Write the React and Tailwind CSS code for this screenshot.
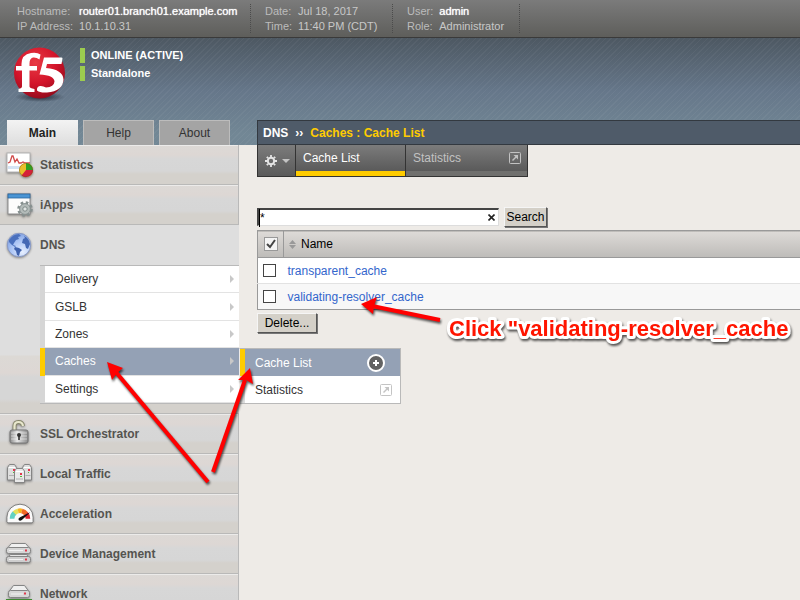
import React from "react";

const Shadow = "drop-shadow-[0_1px_1px_rgba(0,0,0,0.4)]";

function StatisticsIcon() {
  return (
    <svg viewBox="0 0 28 28" className={"h-7 w-7 " + Shadow}>
      <rect x="1" y="2" width="23" height="19" fill="#fff" stroke="#b4b4b4" />
      <rect x="2" y="15" width="21" height="3" fill="#d5e4f5" />
      <path d="M2 12l2-1 2-6h1l2 6 2-3 2 4 2 0 2-1 2 1h5" fill="none" stroke="#d04a4a" strokeWidth="1.3" />
      <circle cx="20" cy="19" r="7" fill="#e8bf2a" />
      <path d="M20 19V12a7 7 0 0 1 7 7z" fill="#2fa023" />
      <path d="M20 19h7a7 7 0 0 1-11.500 5.400z" fill="#d5203a" />
      <circle cx="20" cy="19" r="6.600" fill="none" stroke="#6a4a20" strokeOpacity=".5" strokeWidth=".8" />
    </svg>
  );
}

function AppsIcon() {
  return (
    <svg viewBox="0 0 28 28" className={"h-7 w-7 " + Shadow}>
      <rect x="2" y="3" width="22" height="20" fill="#fcfcfc" stroke="#8b8b8b" />
      <rect x="2" y="3" width="22" height="4" fill="#4a94d4" stroke="#2b66a0" strokeWidth=".8" />
      <circle cx="19" cy="18" r="6.500" fill="none" stroke="#86908f" strokeWidth="2.600" strokeDasharray="2.600 2.500" />
      <circle cx="19" cy="18" r="5.400" fill="#b3bbb9" stroke="#86908f" />
      <circle cx="19" cy="18" r="2.200" fill="#dfe3e2" stroke="#7f8a88" />
    </svg>
  );
}

function GlobeIcon() {
  return (
    <svg viewBox="0 0 28 28" className={"h-7 w-7 " + Shadow}>
      <defs>
        <radialGradient id="globe" cx=".65" cy=".8" r=".85">
          <stop offset="0" stopColor="#e6efff" />
          <stop offset=".6" stopColor="#a9c3f4" />
          <stop offset="1" stopColor="#7b9de0" />
        </radialGradient>
      </defs>
      <circle cx="13" cy="14" r="11.700" fill="url(#globe)" stroke="#8798c4" />
      <path d="M3 9q4-6 10-6l2 2-3 1 1 2-3 1-2 3-1 2 3 1-1 1-3-2-3-3z" fill="#4a70bd" />
      <path d="M9 16l4 1 3 2-2 2-1 4-2-1-1-4-2-2z" fill="#3f62ad" />
      <path d="M18 5q5 2 6 8l-2 5-2-1-1-4-3-1 1-4 2-1z" fill="#4468b4" />
    </svg>
  );
}

function LockIcon() {
  return (
    <svg viewBox="0 0 28 28" className={"h-7 w-7 " + Shadow}>
      <defs>
        <linearGradient id="steel" x1="0" y1="0" x2="1" y2="0">
          <stop offset="0" stopColor="#8a8a8a" />
          <stop offset=".4" stopColor="#e6e6e6" />
          <stop offset="1" stopColor="#8a8a8a" />
        </linearGradient>
      </defs>
      <path d="M8.500 12V6q0-4 4-4t4.500 4" fill="none" stroke="#85856a" strokeWidth="4" />
      <path d="M8.500 12V6q0-4 4-4t4.500 4" fill="none" stroke="#e8e7cd" strokeWidth="2.200" />
      <rect x="4" y="10" width="18" height="13" rx="2" fill="url(#steel)" stroke="#777" />
      <path d="M5 13h16M5 16h16M5 19h16" stroke="#fff" strokeOpacity=".5" />
      <circle cx="13" cy="15" r="2" fill="#333" />
      <path d="M13 15v5" stroke="#333" strokeWidth="1.600" />
    </svg>
  );
}

function TrafficIcon() {
  return (
    <svg viewBox="0 0 28 28" className={"h-7 w-7 " + Shadow}>
      <g stroke="#858585">
        <path d="M1.500 20V7.500l2-3h5l2 3V20z" fill="#dedede" />
        <path d="M16.500 20V7.500l2-3h5l2 3V20z" fill="#dedede" />
        <path d="M8.500 22.500V11l2-2.500h6L18.500 11v11.500z" fill="#e9e9e9" />
      </g>
      <path d="M3 7.500h6M18 7.500h6M10 11.500h7" stroke="#fff" />
      <path d="M3 15.500h5M19.500 15.500h5M10 19h7" stroke="#b0b0b0" />
      <path d="M7 9h2v2H7zM22 9h2v2h-2zM14 13h2v2h-2z" fill="#e0384c" />
      <path d="M7 12h1v1H7zM22 12h1v1h-1zM14 16h2v1h-2z" fill="#58b83a" />
    </svg>
  );
}

function GaugeIcon() {
  return (
    <svg viewBox="0 0 30 28" className={"h-7 w-7 " + Shadow}>
      <path d="M1 22.500v-5a14 14 0 0 1 28 0v5l-1 1H2z" fill="#fafafa" stroke="#777" />
      <g fill="none" strokeWidth="5">
        <path d="M6.500 19a8.500 8.500 0 0 1 3-6.500" stroke="#62d1c3" />
        <path d="M9 13a8.500 8.500 0 0 1 4-2.300" stroke="#e4e25a" />
        <path d="M13 10.700a8.500 8.500 0 0 1 4 0" stroke="#f8b421" />
        <path d="M17 10.700a8.500 8.500 0 0 1 4.500 3" stroke="#f06a24" />
        <path d="M21.500 13.500a8.500 8.500 0 0 1 2 5.500" stroke="#dd2432" />
      </g>
      <path d="M26 12L17 20.500q-2 1.500-3.500 0-.8-2 1.500-3z" fill="#111" />
    </svg>
  );
}

function DeviceIcon() {
  return (
    <svg viewBox="0 0 28 28" className={"h-7 w-7 " + Shadow}>
      <g stroke="#858585">
        <path d="M1.500 8l4-4.500h14l4 4.500v4h-22z" fill="#f0f0f0" />
        <rect x=".500" y="7.500" width="24" height="6" rx="2" fill="#d6d6d6" />
        <path d="M1.500 18l3-3.500h16l3 3.500v4h-22z" fill="#e5e5e5" />
        <rect x=".500" y="16.500" width="24" height="6" rx="2" fill="#cecece" />
      </g>
      <path d="M3 10.500h14M3 19.500h14" stroke="#f2f2f2" />
      <path d="M19 9.500h2v2h-2zM19 18.500h2v2h-2z" fill="#e0384c" />
    </svg>
  );
}

function NetworkIcon() {
  return (
    <svg viewBox="0 0 28 28" className={"h-7 w-7 " + Shadow}>
      <path d="M0 19h26v3H0z" fill="#3d8a32" />
      <g stroke="#858585">
        <path d="M3.500 11l4-5.500h11l4 5.500v5h-19z" fill="#f0f0f0" />
        <rect x="2.500" y="10.500" width="21" height="7" rx="2" fill="#d6d6d6" />
      </g>
      <path d="M5 14h12" stroke="#f2f2f2" />
      <path d="M18 12.500h2v2h-2z" fill="#e0384c" />
    </svg>
  );
}

function Logo() {
  return (
    <svg viewBox="0 0 56 58" className="h-[58px] w-14" role="img" aria-label="f5">
      <defs>
        <radialGradient id="ball" cx=".42" cy=".3" r=".75">
          <stop offset="0" stopColor="#e83a44" />
          <stop offset=".55" stopColor="#d3142a" />
          <stop offset="1" stopColor="#8d0a1b" />
        </radialGradient>
        <radialGradient id="floor">
          <stop offset="0" stopColor="#1d2530" stopOpacity=".9" />
          <stop offset="1" stopColor="#1d2530" stopOpacity="0" />
        </radialGradient>
      </defs>
      <ellipse cx="28" cy="50" rx="25" ry="5" fill="url(#floor)" />
      <circle cx="27.500" cy="26" r="25.500" fill="url(#ball)" />
      <path
        d="M4 19h5.500v-2q0-9.500 9.500-11 6-1 9.500 1.500l-1 5q-3.500-2.500-6.500-2-3.500 1-3.500 6v2.500H25v4.500h-7.500v16q0 1.800 5 2.500v3H6.500v-3q3.500-.7 3.500-2.500v-16H4z"
        fill="#fff"
      />
      <path
        d="M32 10.500h17.500q1 0 1 1L49.500 17H35l-1 4q17 1.500 17.500 11.500-.5 11.500-16.500 13-7 .5-10-2-.5-4 3-4.500 3-.3 6 1.500 8-.5 8.500-6-.5-6.500-15-7z"
        fill="#fff"
      />
    </svg>
  );
}

function PopOutIcon({ className }) {
  return (
    <svg viewBox="0 0 12 12" className={className} fill="none" stroke="currentColor">
      <rect x=".5" y=".5" width="11" height="11" rx="1" />
      <path d="M3.500 8.500l4-4" strokeWidth="1.500" />
      <path d="M4.500 3h4.500v4.500z" fill="currentColor" stroke="none" />
    </svg>
  );
}

function GearIcon() {
  return (
    <svg viewBox="0 0 14 14" className="h-3.5 w-3.5" fill="none" stroke="#e4e4e4">
      <circle cx="7" cy="7" r="3.200" strokeWidth="2" />
      <path d="M7 1v2M7 11v2M1 7h2M11 7h2M2.800 2.800l1.400 1.400M9.800 9.800l1.400 1.400M2.800 11.200l1.400-1.400M9.800 4.200l1.400-1.400" strokeWidth="1.800" />
    </svg>
  );
}

const rowFill =
  "bg-[linear-gradient(to_bottom,#dcd9d6_0px,#ddd7d4_10px,#d7d7d7_14px,#d6d6d6_26px,#d4d1cc_29px,#d4d1cc_38px)]";

function SideRow({ icon, children }) {
  return (
    <li>
      <a
        href="#"
        className={
          "flex h-10 items-center gap-1.5 border-b border-[#b9b9b8] pl-[6px] text-[12px] font-bold text-[#555450] shadow-[inset_0_1px_0_#ecebea] " +
          rowFill
        }
      >
        {icon}
        {children}
      </a>
    </li>
  );
}

function MenuItem({ children, active, flyout }) {
  return (
    <li
      className={
        "relative flex flex-1 border-l-[5px] " +
        (active ? "border-l-[#ffcc00] bg-[#94a1b5] text-white" : "border-l-[#d6d6d6] bg-white text-[#333]")
      }
    >
      <a href="#" className="flex flex-1 items-center justify-between border-b border-[#e3e3e3] pr-[5px] pl-2.5">
        {children}
        <svg viewBox="0 0 4 8" className="h-2 w-1">
          <path d="M0 0l4 4-4 4z" fill="#c8c8c8" />
        </svg>
      </a>
      {flyout}
    </li>
  );
}

function Flyout() {
  return (
    <ul className="absolute top-0 left-full z-10 w-[162px] border border-[#b9b9b9] border-l-[#eeebe7] text-[#333]">
      <li className="border-l-[5px] border-[#ffcc00] bg-[#94a1b5] text-white">
        <a href="#" className="flex h-[27px] items-center justify-between pr-[15px] pl-2.5">
          Cache List
          <svg viewBox="0 0 18 18" className="h-[18px] w-[18px]">
            <circle cx="9" cy="9" r="8" fill="#626262" stroke="#fff" strokeWidth="2" />
            <path d="M9 6v6M6 9h6" stroke="#fff" strokeWidth="2" />
          </svg>
        </a>
      </li>
      <li className="border-l-[5px] border-[#dddddd] bg-white">
        <a href="#" className="flex h-[27px] items-center justify-between pr-2 pl-2.5">
          Statistics
          <PopOutIcon className="h-3 w-3 text-[#c4c4c4]" />
        </a>
      </li>
    </ul>
  );
}

function InfoPair({ rows, className }) {
  return (
    <dl
      className={
        "grid h-[29px] grid-cols-[auto_1fr] content-center border-r border-dotted border-[#4b4b4b] text-[11px] leading-[15px] " +
        className
      }
    >
      {rows.map(([label, value, strong]) => (
        <React.Fragment key={label}>
          <dt className="text-[#bcbcbc]">{label}</dt>
          <dd className={strong ? "text-white [text-shadow:0_0_1px_#ffffff]" : "text-[#c8c8c8]"}>{value}</dd>
        </React.Fragment>
      ))}
    </dl>
  );
}

const bevel = "border border-[#f5f5f5] border-r-[#555] border-b-[#555] bg-[#d4d0c8] shadow-[1px_1px_0_#777] text-black";

function CacheTable() {
  return (
    <table className="mt-[3px] w-full border-collapse text-[12px]">
      <thead>
        <tr className="h-[27px] border-y border-[#999] bg-linear-to-b from-[#dddad7] to-[#bebcb9]">
          <th className="w-[26px] border-x border-[#999] p-0">
            <span className="flex justify-center">
              <input
                type="checkbox"
                defaultChecked
                aria-label="Select all"
                className="h-[14px] w-[14px] appearance-none border border-[#999] bg-[#f4f4f4]"
              />
              <svg viewBox="0 0 14 14" className="pointer-events-none -ml-[14px] h-[14px] w-[14px]">
                <path d="M3 7l3 3 5-7" fill="none" stroke="#444" strokeWidth="2" />
              </svg>
            </span>
          </th>
          <th className="p-0 pl-[5px] text-left font-normal text-black">
            <span className="flex items-center gap-[5px]">
              <svg viewBox="0 0 7 9" className="h-[9px] w-[7px]" fill="#999">
                <path d="M0 4l3.500-4L7 4zM0 5l3.500 4L7 5z" />
              </svg>
              Name
            </span>
          </th>
        </tr>
      </thead>
      <tbody className="border-b border-l border-[#999]">
        {["transparent_cache", "validating-resolver_cache"].map((name, i) => (
          <tr key={name} className={"h-[26px] " + (i ? "border-t border-[#e2e2e2] bg-[#f7f7f7]" : "bg-white")}>
            <td className="p-0">
              <input
                type="checkbox"
                aria-label={name}
                className="ml-[5px] block h-[13px] w-[13px] appearance-none border border-[#444] bg-white"
              />
            </td>
            <td className="p-0 pl-1">
              <a href="#" className="text-[#3366cc]">
                {name}
              </a>
            </td>
          </tr>
        ))}
      </tbody>
    </table>
  );
}

function Annotations() {
  return (
    <svg
      width="800"
      height="600"
      className="pointer-events-none absolute top-0 left-0 z-20 drop-shadow-[1px_2px_1px_rgba(0,0,0,0.65)]"
    >
      <g stroke="#ff0000" strokeWidth="4">
        <path d="M208 482L115 371" />
        <path d="M213 472L245 380" />
        <path d="M440 320L372 306" />
      </g>
      <g fill="#ff0000">
        <path d="M107 362l16 6-6 5-5 7z" />
        <path d="M250 368l3 16-7-4-8 0z" />
        <path d="M361 304l16-7-3 9-1 8z" />
      </g>
      <text
        x="449"
        y="336"
        className="fill-[#ff1500] stroke-white text-[22px] font-bold [paint-order:stroke]"
        strokeWidth="6"
        strokeLinejoin="round"
      >
        Click "validating-resolver_cache
      </text>
    </svg>
  );
}

export default function App() {
  return (
    <div className="relative flex h-screen flex-col overflow-hidden bg-[#eeebe7] font-['Liberation_Sans',Arial,sans-serif] text-[12px]">
      <header className="flex h-[38px] shrink-0 items-center border-b border-[#3a3a3a] bg-linear-to-b from-[#7b7b7b] to-[#5e5e5b]">
        <InfoPair
          className="w-[251px] gap-x-[6px] pl-[17px]"
          rows={[["Hostname:", "router01.branch01.example.com", true], ["IP Address:", "10.1.10.31"]]}
        />
        <InfoPair className="w-[142px] gap-x-[6px] pl-[14px]" rows={[["Date:", "Jul 18, 2017"], ["Time:", "11:40 PM (CDT)"]]} />
        <InfoPair className="w-[127px] gap-x-[6px] pl-[14px]" rows={[["User:", "admin", true], ["Role:", "Administrator"]]} />
      </header>

      <div className="flex h-[107px] shrink-0 items-end bg-[repeating-linear-gradient(135deg,rgba(255,255,255,0.04)_0px,rgba(255,255,255,0.04)_1px,transparent_1px,transparent_4px),linear-gradient(to_bottom,#4d5862,#66778a_50%,#728795_90%)]">
        <div className="flex h-full w-[257px] shrink-0 flex-col justify-between">
          <div className="flex gap-3 pt-[9px] pl-3">
            <Logo />
            <div className="flex flex-col gap-[3px] pt-px text-[11px] leading-[15px] font-bold text-white">
              <span className="border-l-[5px] border-[#9ccc4f] pl-[6px]">ONLINE (ACTIVE)</span>
              <span className="border-l-[5px] border-[#9ccc4f] pl-[6px]">Standalone</span>
            </div>
          </div>
          <nav className="flex gap-[5px] pl-[7px]">
            <button className="h-[25px] w-[71px] bg-linear-to-b from-[#f3f3f3] to-[#dedede] font-bold text-[#222]">Main</button>
            <button className="h-[25px] w-[71px] border border-b-0 border-[#bcbcbc] bg-[#a4a4a4] text-[#333]">Help</button>
            <button className="h-[25px] w-[71px] border border-b-0 border-[#bcbcbc] bg-[#a4a4a4] text-[#333]">About</button>
          </nav>
        </div>
        <div className="flex h-[25px] flex-1 items-center gap-[7px] border border-r-0 border-[#333940] bg-[#4f5b69] pl-[5px] font-bold text-white">
          <span>DNS</span>
          <span>››</span>
          <span className="text-[#ffcc00]">Caches : Cache List</span>
        </div>
      </div>

      <div className="flex min-h-0 flex-1">
        <aside className="w-[239px] shrink-0 border-r border-[#b9b9b9] bg-[#dedede]">
          <ul>
            <SideRow icon={<StatisticsIcon />}>Statistics</SideRow>
            <SideRow icon={<AppsIcon />}>iApps</SideRow>
            <li className="-mr-px border-b border-[#b9b9b8] bg-[linear-gradient(to_bottom,#dedede_130px,#dcd9d5_131px,#ddd7d4_148px,#d6d6d6_152px,#d6d6d6_174px,#d4d1cc_178px)] pb-[9px]">
              <a href="#" className="flex h-10 items-center gap-1.5 pl-[6px] font-bold text-[#555450]">
                <GlobeIcon />
                DNS
              </a>
              <ul className="ml-10 flex h-[139px] flex-col border-y border-[#b9b9b9]">
                <MenuItem>Delivery</MenuItem>
                <MenuItem>GSLB</MenuItem>
                <MenuItem>Zones</MenuItem>
                <MenuItem active flyout={<Flyout />}>
                  Caches
                </MenuItem>
                <MenuItem>Settings</MenuItem>
              </ul>
            </li>
            <SideRow icon={<LockIcon />}>SSL Orchestrator</SideRow>
            <SideRow icon={<TrafficIcon />}>Local Traffic</SideRow>
            <SideRow icon={<GaugeIcon />}>Acceleration</SideRow>
            <SideRow icon={<DeviceIcon />}>Device Management</SideRow>
            <SideRow icon={<NetworkIcon />}>Network</SideRow>
          </ul>
        </aside>

        <main className="min-w-0 flex-1 pl-[18px]">
          <nav className="flex h-8 w-[271px] gap-px border border-t-0 border-[#333] bg-[#333]">
            <button aria-label="Options" className="flex w-[37px] items-center gap-1 bg-linear-to-b from-[#7c7c7c] to-[#5a5a5a] pl-[6px]">
              <GearIcon />
              <svg viewBox="0 0 8 4" className="h-1 w-2">
                <path d="M0 0h8l-4 4z" fill="#c4c4c4" />
              </svg>
            </button>
            <button className="w-[109px] border-b-[5px] border-[#ffcc00] bg-linear-to-b from-[#7c7c7c] to-[#5a5a5a] pl-[7px] text-left text-white">
              Cache List
            </button>
            <button className="flex flex-1 items-center justify-between border-b-[5px] border-[#70706e] bg-linear-to-b from-[#7c7c7c] to-[#5a5a5a] pr-[6px] pl-[7px] text-[#c2c2c2]">
              Statistics
              <PopOutIcon className="h-3 w-3" />
            </button>
          </nav>

          <form className="mt-[30px] flex items-center gap-[5px]">
            <span className="flex h-[18px] w-[242px] items-center border-t-2 border-r border-b border-l-2 border-[#444] border-r-[#ddd] border-b-[#ddd] bg-white">
              <input aria-label="Search caches" defaultValue="*" className="min-w-0 flex-1 border-l border-black text-black outline-none" />
              <button type="button" aria-label="Clear" className="pr-[3px]">
                <svg viewBox="0 0 7 7" className="h-[7px] w-[7px]" stroke="#222" strokeWidth="1.600">
                  <path d="M.5.5l6 6M6.500.5l-6 6" />
                </svg>
              </button>
            </span>
            <button type="button" className={"h-5 w-[43px] leading-[18px] " + bevel}>
              Search
            </button>
          </form>

          <CacheTable />

          <button className={"mt-[3px] h-5 w-[60px] leading-[18px] " + bevel}>Delete...</button>
        </main>
      </div>

      <Annotations />
    </div>
  );
}
